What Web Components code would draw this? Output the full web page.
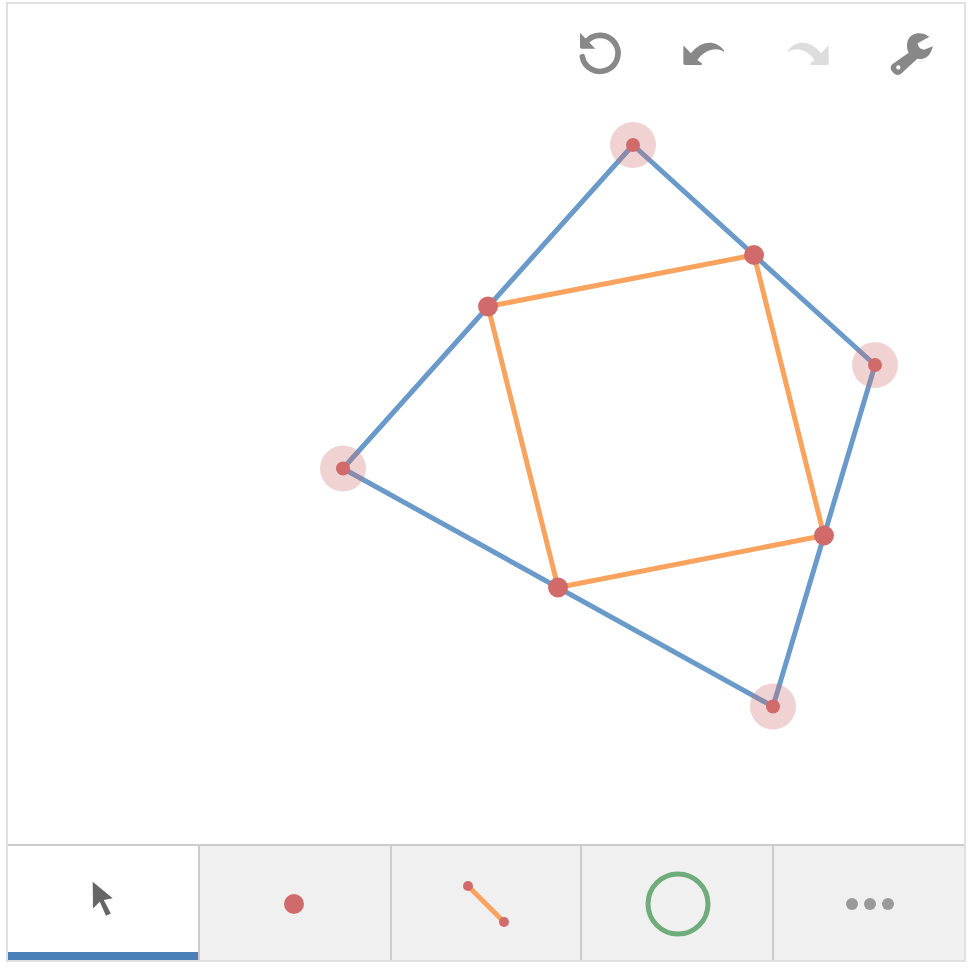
<!DOCTYPE html>
<html lang="en">
<head>
<meta charset="utf-8">
<title>Geometry construction</title>
<style>
html,body{margin:0;padding:0;background:#fff}
body{padding:2px 0 0 6px;font-family:"Liberation Sans",sans-serif}
</style>
</head>
<body>
<geo-app>
  <geo-board slot="board"></geo-board>
  <geo-actions slot="actions">
    <action-button icon="reset" label="Reset"></action-button>
    <action-button icon="undo" label="Undo"></action-button>
    <action-button icon="redo" label="Redo" disabled></action-button>
    <action-button icon="tools" label="Tools"></action-button>
  </geo-actions>
  <geo-toolbar slot="toolbar">
    <tool-tab tool="move" active></tool-tab>
    <tool-tab tool="point"></tool-tab>
    <tool-tab tool="segment"></tool-tab>
    <tool-tab tool="circle"></tool-tab>
    <tool-tab tool="more" last></tool-tab>
  </geo-toolbar>
</geo-app>
<script>
const ARROW='M372 108L393 130C415 100 460 80 493 122L492 125C465 110 435 120 412 150L425 160Q429 165 421 165H375Q370 165 370 160V112Q370 106 372 108Z';
const ICONS={
  reset:{vb:"48 57 144 144",g:'<path d="M67 140A54 54 0 1 0 80 94" fill="none" stroke="currentColor" stroke-width="17" stroke-linecap="round"/><path d="M60 68V112Q60 116 64 116H106Z" fill="currentColor"/>'},
  undo:{vb:"360 57 144 144",g:`<path d="${ARROW}" fill="currentColor"/>`},
  redo:{vb:"360 57 144 144",g:`<path transform="translate(864 0) scale(-1 1)" d="${ARROW}" fill="currentColor"/>`},
  tools:{vb:"354 57 144 144",g:'<path fill-rule="evenodd" d="M478 80C455 64 425 66 414 90C409 103 410 117 416 128L367 163C360 169 361 178 367 185L374 192C381 197 389 196 395 190L442 146C458 150 476 143 484 122C487 117 488 113 488 109L466 118C455 121 444 113 443 100Z M385 166A6.500 6.500 0 1 0 385 179A6.500 6.500 0 1 0 385 166Z" fill="currentColor"/>'}
};
const TOOLS={
  move:{vb:"63 863 80 80",g:'<path d="M92.700 881.700L112.700 898.300L103.800 900L110.800 913.500L106 915.800L99.800 901.700L93 908.500Z" fill="#666"/>'},
  point:{vb:"255 863 80 80",g:'<circle cx="294" cy="904" r="10" fill="#d16a6a"/>'},
  segment:{vb:"446 863 80 80",g:'<path d="M468 886L504 922" stroke="#f9a35f" stroke-width="5"/><circle cx="468" cy="886" r="5" fill="#d16a6a"/><circle cx="504" cy="922" r="5" fill="#d16a6a"/>'},
  circle:{vb:"637 863 80 80",g:'<circle cx="678" cy="904" r="30" fill="none" stroke="#6fac7c" stroke-width="5"/>'},
  more:{vb:"829 863 80 80",g:'<circle cx="852" cy="904" r="6" fill="#999"/><circle cx="870" cy="904" r="6" fill="#999"/><circle cx="888" cy="904" r="6" fill="#999"/>'}
};
function define(name,css,html){
  customElements.define(name,class extends HTMLElement{
    constructor(){super();this.attachShadow({mode:"open"})}
    connectedCallback(){
      this.shadowRoot.innerHTML=`<style>${css}</style>${typeof html==="function"?html(this):html}`;
    }
  });
}
define("geo-app",
 `:host{display:block;width:956px;border:2px solid #e0e0e0;background:#fff}
  .stage{position:relative;height:840px}
  .top{position:absolute;top:0;right:0}`,
 `<div class="stage"><slot name="board"></slot><div class="top"><slot name="actions"></slot></div></div><slot name="toolbar"></slot>`);
define("geo-actions",
 `:host{display:flex}`,`<slot></slot>`);
define("action-button",
 `:host{display:flex;width:104px;height:98px;align-items:center;justify-content:center;color:#888}
  :host([disabled]){color:#ddd}
  svg{display:block;width:48px;height:48px}`,
 h=>{const i=ICONS[h.getAttribute("icon")];return `<svg viewBox="${i.vb}" role="img" aria-label="${h.getAttribute("label")}">${i.g}</svg>`});
define("geo-toolbar",
 `:host{display:grid;grid-template-columns:192px 192px 190px 192px 190px;height:116px}`,`<slot></slot>`);
define("tool-tab",
 `:host{display:flex;align-items:center;justify-content:center;box-sizing:border-box;background:#f0f0f0;border-top:2px solid #ccc;border-right:2px solid #ccc}
  :host([last]){border-right:0}
  :host([active]){background:#fff;box-shadow:inset 0 -8px 0 #4a80b8}
  svg{display:block;width:80px;height:80px}`,
 h=>{const t=TOOLS[h.getAttribute("tool")];return `<svg viewBox="${t.vb}">${t.g}</svg>`});
const V=[[633,145],[875,365],[773,706.500],[343,468.500]];
const M=[[754,255],[824,535.500],[558,587.500],[488,306.500]];
const loop=p=>p.map(q=>q.join(" ")).join(" ");
define("geo-board",
 `:host{display:block;width:956px;height:840px}svg{display:block;width:956px;height:840px}`,
 `<svg viewBox="8 4 956 840">
  <polygon points="${loop(V)}" fill="none" stroke="#6a9ac9" stroke-width="5" stroke-linejoin="round"/>
  <polygon points="${loop(M)}" fill="none" stroke="#f9a35f" stroke-width="5" stroke-linejoin="round"/>
  ${V.map(p=>`<circle cx="${p[0]}" cy="${p[1]}" r="23" fill="#d16a6a" fill-opacity=".3"/>`).join("")}
  ${V.map(p=>`<circle cx="${p[0]}" cy="${p[1]}" r="7" fill="#d16a6a"/>`).join("")}
  ${M.map(p=>`<circle cx="${p[0]}" cy="${p[1]}" r="10" fill="#d16a6a"/>`).join("")}
 </svg>`);
</script>
</body>
</html>
